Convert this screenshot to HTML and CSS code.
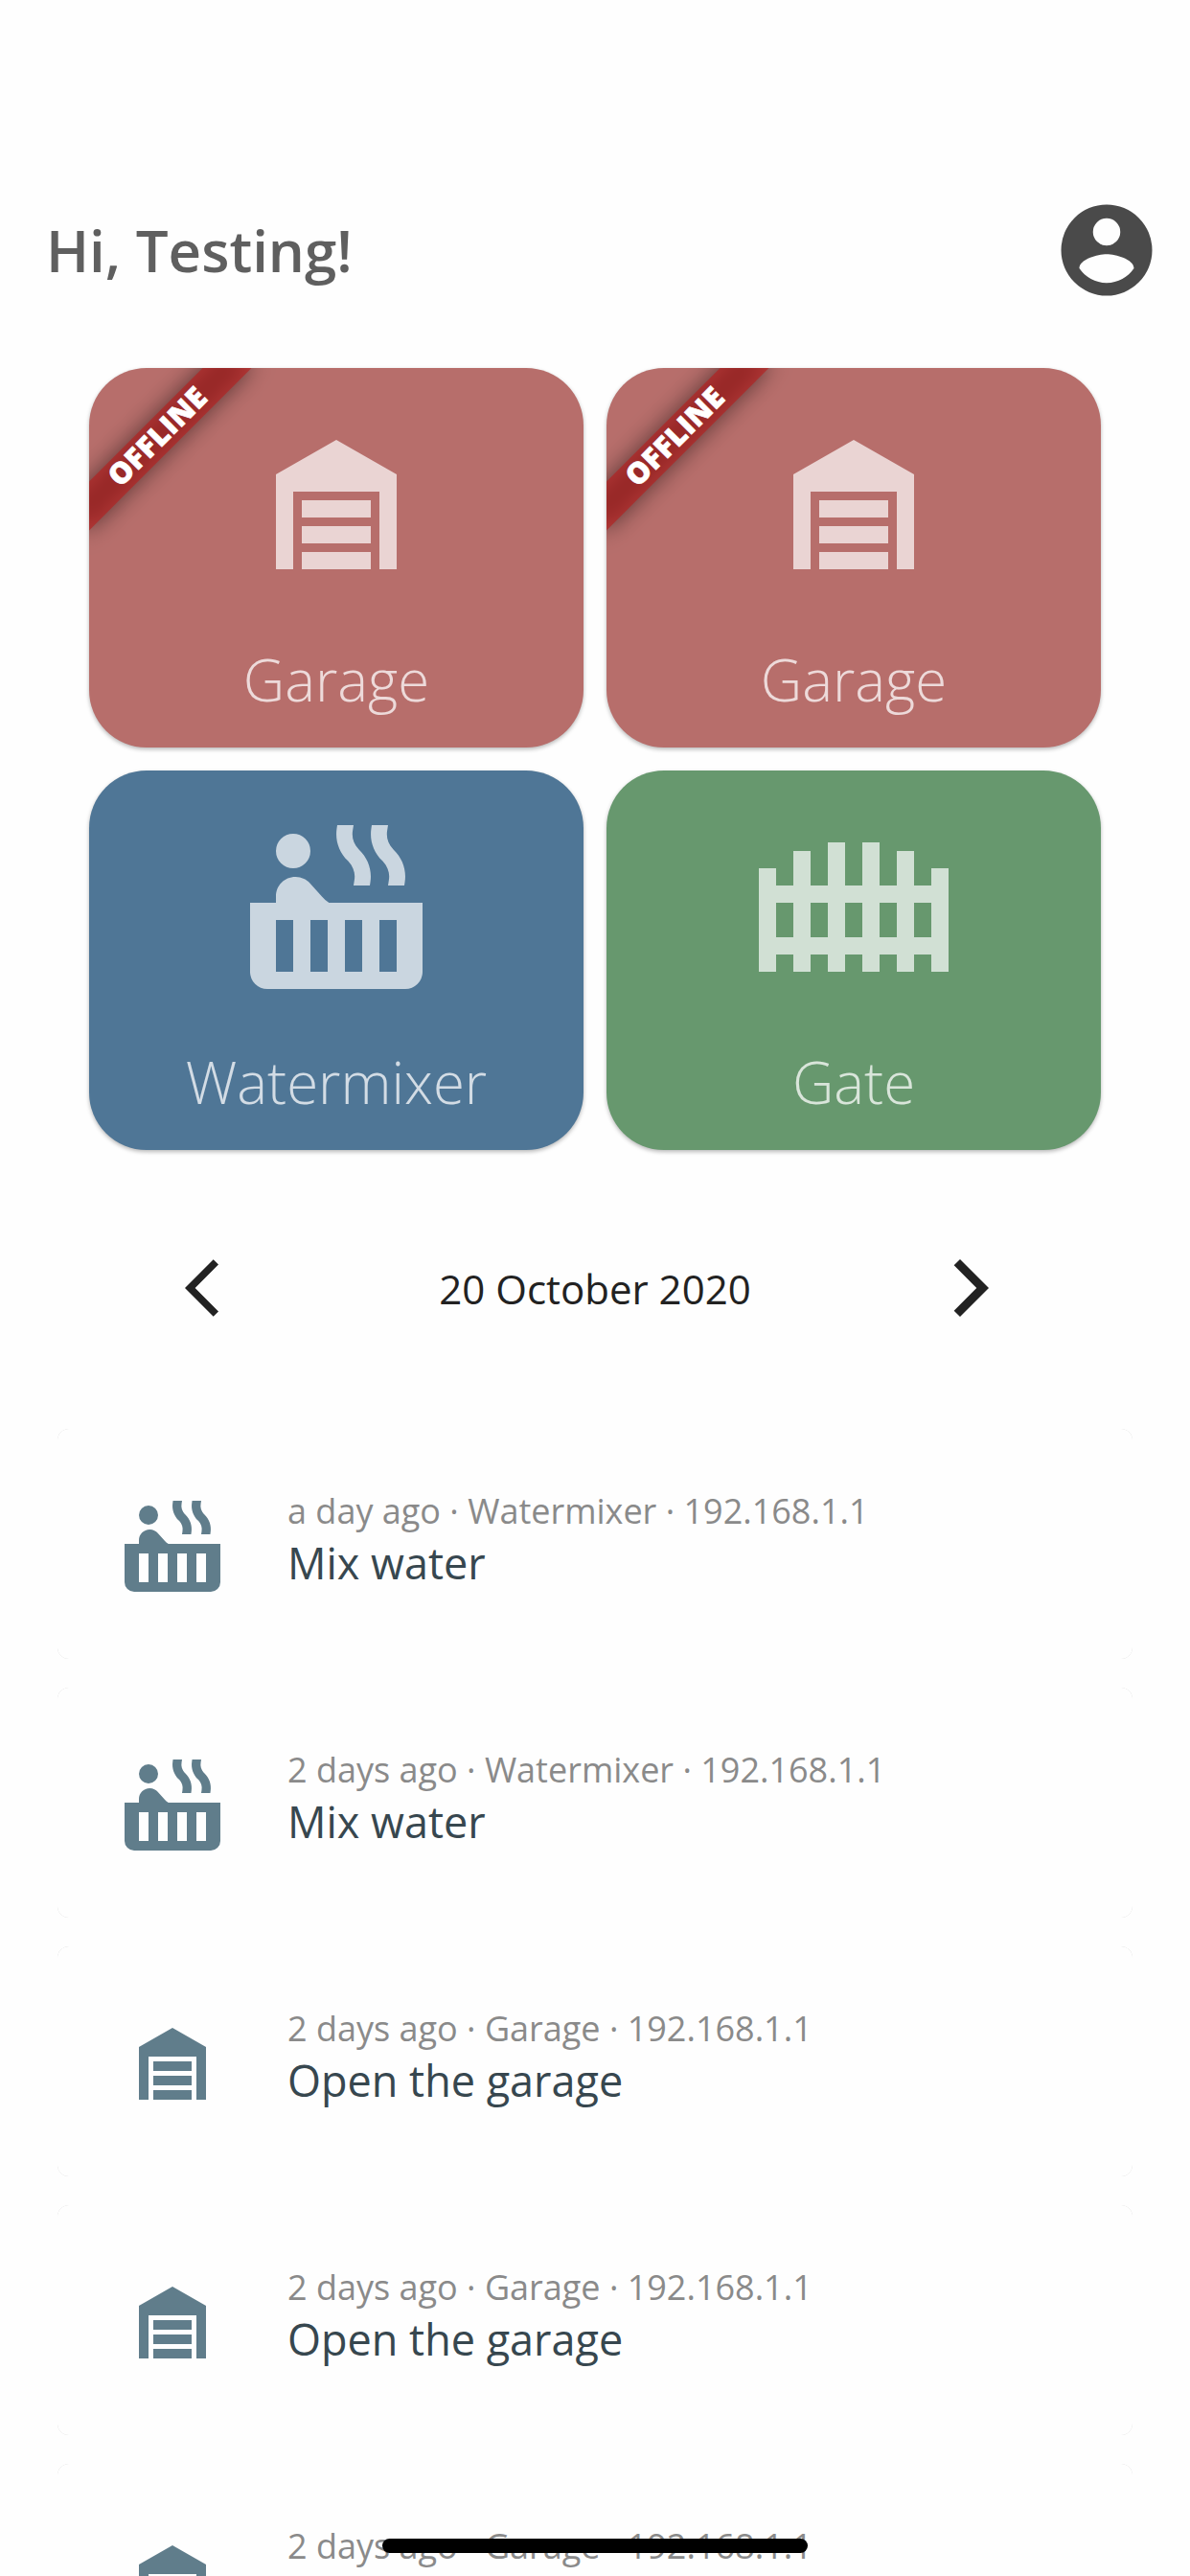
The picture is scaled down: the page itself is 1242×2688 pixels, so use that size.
FILE: index.html
```html
<!DOCTYPE html>
<html lang="en">
<head>
<meta charset="utf-8">
<title>Home</title>
<link rel="stylesheet" href="styles.css">
</head>
<body>
<svg class="sprite" aria-hidden="true">
  <symbol id="garage" viewBox="0 0 24 24"><path d="M19,20H17V11H7V20H5V9L12,5L19,9V20M8,12H16V14H8V12M8,15H16V17H8V15M16,18V20H8V18H16Z"/></symbol>
  <symbol id="hot-tub" viewBox="0 0 24 24"><path d="M7,4A2,2 0 0,1 9,6A2,2 0 0,1 7,8A2,2 0 0,1 5,6A2,2 0 0,1 7,4M11.15,12H22V20A2,2 0 0,1 20,22H4A2,2 0 0,1 2,20V12H5V11.25C5,10 6,9 7.25,9H7.28C7.62,9 7.95,9.09 8.24,9.23C8.5,9.35 8.74,9.5 8.93,9.73L10.33,11.28C10.56,11.54 10.84,11.78 11.15,12M7,20V14H5V20H7M11,20V14H9V20H11M15,20V14H13V20H15M19,20V14H17V20H19M18.65,5.86C19.68,6.86 20.16,8.21 19.95,9.57L19.89,10H18L18.09,9.41C18.24,8.62 18,7.83 17.42,7.21L17.35,7.15C16.32,6.14 15.85,4.79 16.05,3.43L16.11,3H18L17.91,3.59C17.76,4.38 18,5.17 18.58,5.79L18.65,5.86M14.65,5.86C15.68,6.86 16.16,8.21 15.95,9.57L15.89,10H14L14.09,9.41C14.24,8.62 14,7.83 13.42,7.21L13.35,7.15C12.32,6.14 11.85,4.79 12.05,3.43L12.11,3H14L13.91,3.59C13.76,4.38 14,5.17 14.58,5.79L14.65,5.86Z"/></symbol>
  <symbol id="gate" viewBox="0 0 24 24"><path d="M9,5V10H7V6H5V10H3V8H1V20H3V18H5V20H7V18H9V20H11V18H13V20H15V18H17V20H19V18H21V20H23V8H21V10H19V6H17V10H15V5H13V10H11V5H9M3,12H5V16H3V12M7,12H9V16H7V12M11,12H13V16H11V12M15,12H17V16H15V12M19,12H21V16H19V12Z"/></symbol>
</svg>

<header class="header">
  <h1 class="greeting">Hi, Testing!</h1>
  <svg class="avatar" viewBox="0 0 24 24"><path d="M12,19.2C9.5,19.2 7.29,17.92 6,16C6.03,14 10,12.9 12,12.9C14,12.9 17.97,14 18,16C16.71,17.92 14.5,19.2 12,19.2M12,5A3,3 0 0,1 15,8A3,3 0 0,1 12,11A3,3 0 0,1 9,8A3,3 0 0,1 12,5M12,2A10,10 0 0,0 2,12A10,10 0 0,0 12,22A10,10 0 0,0 22,12A10,10 0 0,0 12,2Z"/></svg>
</header>

<main>
  <section class="tiles">
    <div class="tile tile-red">
      <div class="ribbon"><span class="ribbon-text">OFFLINE</span></div>
      <svg class="tile-icon"><use href="#garage"/></svg>
      <div class="tile-label">Garage</div>
    </div>
    <div class="tile tile-red">
      <div class="ribbon"><span class="ribbon-text">OFFLINE</span></div>
      <svg class="tile-icon"><use href="#garage"/></svg>
      <div class="tile-label">Garage</div>
    </div>
    <div class="tile tile-blue">
      <svg class="tile-icon"><use href="#hot-tub"/></svg>
      <div class="tile-label">Watermixer</div>
    </div>
    <div class="tile tile-green">
      <svg class="tile-icon"><use href="#gate"/></svg>
      <div class="tile-label">Gate</div>
    </div>
  </section>

  <nav class="date-nav">
    <svg class="arrow" viewBox="0 0 24 24"><path d="M11.67,3.87L9.9,2.1 0,12l9.9,9.9 1.77,-1.77L3.54,12z"/></svg>
    <span class="date">20 October 2020</span>
    <svg class="arrow" viewBox="0 0 24 24"><path d="M5.88,4.12L13.76,12l-7.88,7.88L8,22l10,-10L8,2z"/></svg>
  </nav>

  <section class="log">
    <article class="entry"><div class="entry-body">
      <svg class="entry-icon"><use href="#hot-tub"/></svg>
      <div class="entry-text"><div class="meta">a day ago · Watermixer · 192.168.1.1</div><div class="title">Mix water</div></div>
    </div></article>
    <article class="entry"><div class="entry-body">
      <svg class="entry-icon"><use href="#hot-tub"/></svg>
      <div class="entry-text"><div class="meta">2 days ago · Watermixer · 192.168.1.1</div><div class="title">Mix water</div></div>
    </div></article>
    <article class="entry"><div class="entry-body">
      <svg class="entry-icon"><use href="#garage"/></svg>
      <div class="entry-text"><div class="meta">2 days ago · Garage · 192.168.1.1</div><div class="title">Open the garage</div></div>
    </div></article>
    <article class="entry"><div class="entry-body">
      <svg class="entry-icon"><use href="#garage"/></svg>
      <div class="entry-text"><div class="meta">2 days ago · Garage · 192.168.1.1</div><div class="title">Open the garage</div></div>
    </div></article>
    <article class="entry"><div class="entry-body">
      <svg class="entry-icon"><use href="#garage"/></svg>
      <div class="entry-text"><div class="meta">2 days ago · Garage · 192.168.1.1</div></div>
    </div></article>
  </section>
</main>
<div class="home-indicator"></div>
</body>
</html>
```
FILE: styles.css
```css
* {
  box-sizing: border-box;
}

body {
  position: relative;
  width: 1242px;
  height: 2688px;
  margin: 0;
  overflow: hidden;
  background: #fefefe;
  font-family: "Open Sans", "Noto Sans", sans-serif;
}

.sprite {
  display: none;
}

.header {
  display: flex;
  align-items: center;
  justify-content: space-between;
  height: 384px;
  padding: 138px 30px 0 48px;
}

.greeting {
  margin: 0;
  color: #5f5f5f;
  font-size: 60px;
  font-weight: 600;
  line-height: 82px;
}

.avatar {
  width: 114px;
  height: 114px;
  fill: #4a4a4a;
}

.tiles {
  display: grid;
  grid-template-columns: 516px 516px;
  grid-auto-rows: 396px;
  gap: 24px;
  justify-content: center;
}

.tile {
  position: relative;
  display: flex;
  flex-direction: column;
  align-items: center;
  padding-top: 30px;
  overflow: hidden;
  border-radius: 60px;
  box-shadow: 0 2px 4px rgba(0, 0, 0, 0.28);
}

.tile-red { background: #b76e6b; }
.tile-blue { background: #4f7696; }
.tile-green { background: #67986e; }

.tile-icon {
  width: 216px;
  height: 216px;
  fill: rgba(255, 255, 255, 0.7);
}

.tile-label {
  margin-top: 38px;
  color: rgba(255, 255, 255, 0.75);
  font-size: 60px;
  font-weight: 300;
  line-height: 82px;
}

/* Diagonal banner over the tile's top-left corner */
.ribbon {
  position: absolute;
  top: 54px;
  left: -48px;
  width: 240px;
  height: 36px;
  transform: rotate(-45deg);
}

.ribbon::before,
.ribbon::after {
  content: "";
  position: absolute;
  inset: 0;
}

.ribbon::before {
  background: rgba(0, 0, 0, 0.5);
  filter: blur(12px);
}

.ribbon::after {
  background: rgba(183, 28, 28, 0.627);
}

.ribbon-text {
  position: absolute;
  inset: 0;
  z-index: 1;
  color: #fff;
  font-size: 30.6px;
  font-weight: 800;
  letter-spacing: 0.5px;
  line-height: 32px;
  text-align: center;
  -webkit-text-stroke: 0.6px #fff;
}

.date-nav {
  display: flex;
  align-items: center;
  justify-content: space-between;
  height: 72px;
  margin: 108px 192px 0 193px;
}

.arrow {
  width: 72px;
  height: 72px;
  fill: #222;
}

.date {
  padding: 2px 1px 0 0;
  color: #222;
  font-size: 42px;
  line-height: 58px;
}

.log {
  display: grid;
  gap: 30px;
  padding: 111px 60px 0;
}

.entry {
  height: 240px;
  border-radius: 12px;
  background: #ccc;
}

.entry-body {
  display: flex;
  gap: 60px;
  height: 100%;
  padding: 60px;
  border-radius: 12px;
  background: #fefefe;
}

.entry-icon {
  width: 120px;
  height: 120px;
  fill: #607d8b;
}

.meta {
  padding-top: 1px;
  color: #8a8a8a;
  font-size: 36px;
  line-height: 50px;
}

.title {
  color: #37474f;
  font-size: 45px;
  line-height: 58px;
}

.home-indicator {
  position: absolute;
  left: 399px;
  bottom: 24px;
  width: 444px;
  height: 15px;
  border-radius: 8px;
  background: #000;
}
```
